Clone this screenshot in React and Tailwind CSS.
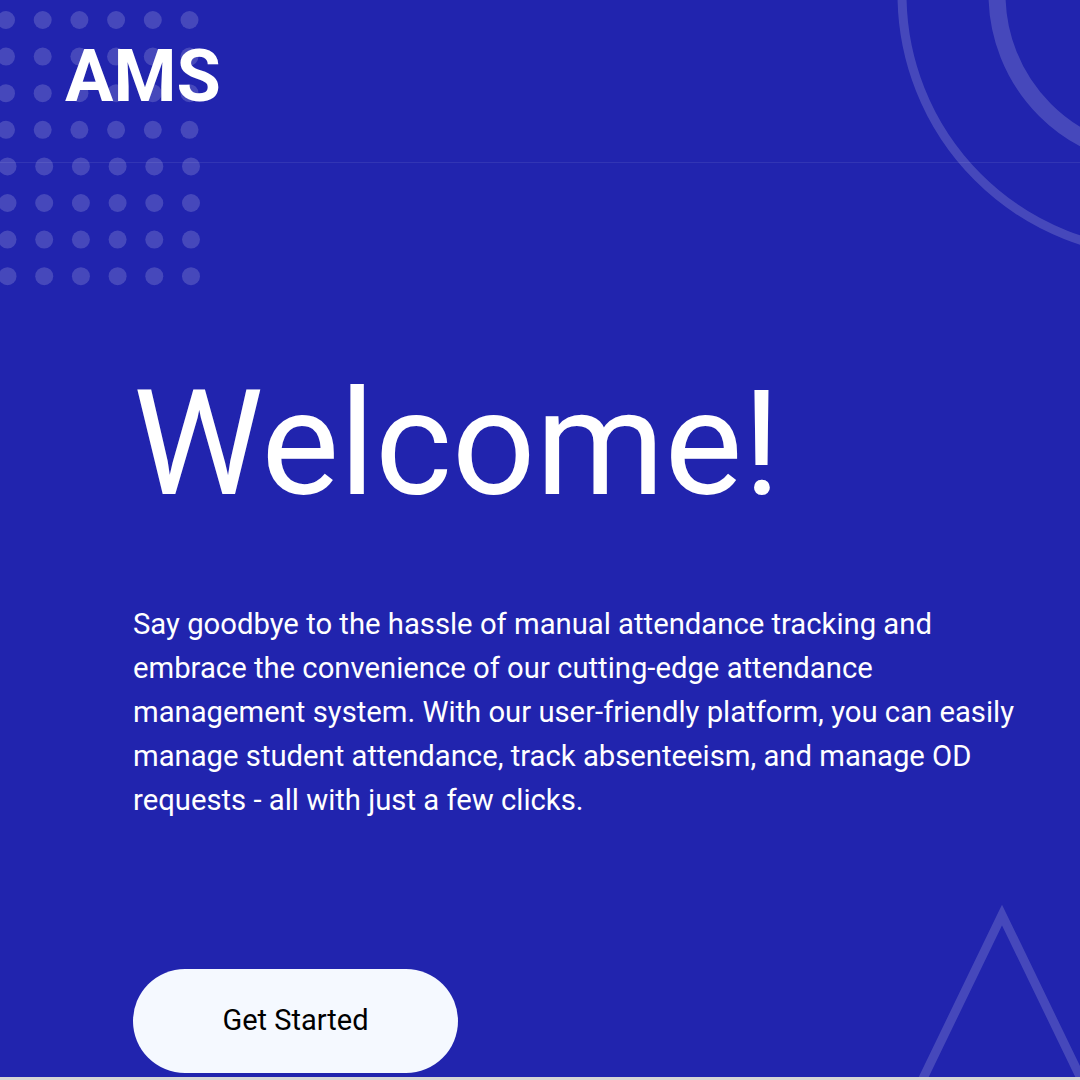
import React from "react";

function Decor() {
  const dots = [];
  for (let j = 0; j < 8; j++) {
    for (let i = 0; i < 6; i++) {
      dots.push(
        <circle key={`${i}-${j}`} cx={6 + 36.7 * i + (j >= 4 ? 1.5 : 0)} cy={20 + 36.6 * j} r="9" fill="rgba(255,255,255,0.17)" />
      );
    }
  }
  return (
    <svg className="absolute inset-0 pointer-events-none" width="1080" height="1077" viewBox="0 0 1080 1077">
      {dots}
      <circle cx="1161" cy="-6" r="259" fill="none" stroke="rgba(255,255,255,0.17)" strokeWidth="9" />
      <circle cx="1161" cy="-6" r="164" fill="none" stroke="rgba(255,255,255,0.17)" strokeWidth="17" />
      <polygon points="1002,915 915,1095 1089,1095" fill="none" stroke="rgba(255,255,255,0.17)" strokeWidth="9" strokeLinejoin="miter" />
    </svg>
  );
}

export default function App() {
  return (
    <div className="w-full h-[1080px] bg-[#d6d6d6] overflow-hidden" style={{ fontFamily: "Roboto, 'Noto Sans', sans-serif" }}>
      <section className="relative h-[1077px] bg-[#2124ae] overflow-hidden text-white">
        <Decor />
        <header className="relative h-[163px] border-b border-white/[0.08] pl-[65px] pt-[41px]">
          <h1 className="text-[72px] leading-none font-bold tracking-normal">AMS</h1>
        </header>
        <main className="relative pl-[133px] pt-[208px]">
          <h2 className="text-[147px] leading-none font-normal">Welcome!</h2>
          <p className="mt-[84px] w-[900px] text-[29.25px] leading-[44px]">
            Say goodbye to the hassle of manual attendance tracking and embrace the convenience of our cutting-edge attendance management system. With our user-friendly platform, you can easily manage student attendance, track absenteeism, and manage OD requests - all with just a few clicks.
          </p>
          <button className="mt-[147px] w-[325px] h-[104px] rounded-full bg-[#f5f9ff] text-black text-[29px] flex items-center justify-center">
            Get Started
          </button>
        </main>
      </section>
    </div>
  );
}
